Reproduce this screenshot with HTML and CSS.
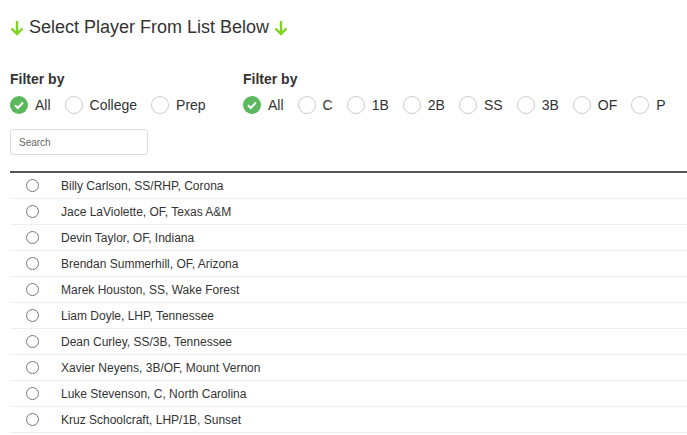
FILE: index.html
```html
<!DOCTYPE html>
<html>
<head>
<meta charset="utf-8">
<link rel="stylesheet" href="styles.css">
</head>
<body>
<div class="page">
  <h2 class="title">
    <svg class="arrow" viewBox="0 0 14 16" width="14" height="16"><path d="M7 1 V14 M1.5 8.5 L7 14 L12.5 8.5" fill="none" stroke="#7ed321" stroke-width="2.4"/></svg>
    <span>Select Player From List Below</span>
    <svg class="arrow" viewBox="0 0 14 16" width="14" height="16"><path d="M7 1 V14 M1.5 8.5 L7 14 L12.5 8.5" fill="none" stroke="#7ed321" stroke-width="2.4"/></svg>
  </h2>

  <div class="filters">
    <div class="group g1">
      <div class="label">Filter by</div>
      <div class="opts">
        <span class="opt"><span class="check"><svg viewBox="0 0 18 18" width="18" height="18"><circle cx="9" cy="9" r="9" fill="#5cb85c"/><path d="M5 9.3 L7.8 12 L13 6.5" fill="none" stroke="#fff" stroke-width="2"/></svg></span>All</span>
        <span class="opt"><span class="circ"></span>College</span>
        <span class="opt"><span class="circ"></span>Prep</span>
      </div>
    </div>
    <div class="group g2">
      <div class="label">Filter by</div>
      <div class="opts">
        <span class="opt"><span class="check"><svg viewBox="0 0 18 18" width="18" height="18"><circle cx="9" cy="9" r="9" fill="#5cb85c"/><path d="M5 9.3 L7.8 12 L13 6.5" fill="none" stroke="#fff" stroke-width="2"/></svg></span>All</span>
        <span class="opt"><span class="circ"></span>C</span>
        <span class="opt"><span class="circ"></span>1B</span>
        <span class="opt"><span class="circ"></span>2B</span>
        <span class="opt"><span class="circ"></span>SS</span>
        <span class="opt"><span class="circ"></span>3B</span>
        <span class="opt"><span class="circ"></span>OF</span>
        <span class="opt"><span class="circ"></span>P</span>
      </div>
    </div>
  </div>

  <input class="search" type="text" placeholder="Search">

  <ul class="list">
    <li><span class="r"></span>Billy Carlson, SS/RHP, Corona</li>
    <li><span class="r"></span>Jace LaViolette, OF, Texas A&amp;M</li>
    <li><span class="r"></span>Devin Taylor, OF, Indiana</li>
    <li><span class="r"></span>Brendan Summerhill, OF, Arizona</li>
    <li><span class="r"></span>Marek Houston, SS, Wake Forest</li>
    <li><span class="r"></span>Liam Doyle, LHP, Tennessee</li>
    <li><span class="r"></span>Dean Curley, SS/3B, Tennessee</li>
    <li><span class="r"></span>Xavier Neyens, 3B/OF, Mount Vernon</li>
    <li><span class="r"></span>Luke Stevenson, C, North Carolina</li>
    <li><span class="r"></span>Kruz Schoolcraft, LHP/1B, Sunset</li>
  </ul>
</div>
</body>
</html>
```
FILE: styles.css
```css
html, body {
  margin: 0;
  padding: 0;
  background: #fff;
}
body {
  font-family: "Liberation Sans", Arial, sans-serif;
  color: #333;
  overflow: hidden;
}
.page {
  padding: 0 0 0 10px;
}
.title {
  margin: 0;
  padding-top: 17px;
  height: 21px;
  display: flex;
  align-items: center;
  gap: 5px;
  font-size: 18px;
  font-weight: normal;
  color: #333;
}
.arrow {
  display: block;
}
.filters {
  display: flex;
  margin-top: 33px;
}
.g1 {
  width: 233px;
}
.label {
  font-size: 14px;
  font-weight: bold;
  line-height: 16px;
}
.opts {
  display: flex;
  align-items: center;
  margin-top: 8px;
  height: 20px;
}
.opt {
  display: flex;
  align-items: center;
  font-size: 14px;
  margin-right: 14px;
}
.check, .circ {
  width: 18px;
  height: 18px;
  margin-right: 7px;
  box-sizing: border-box;
}
.check svg {
  display: block;
}
.circ {
  border: 1px solid #ccc;
  border-radius: 50%;
}
.search {
  display: block;
  margin-top: 14px;
  width: 138px;
  height: 26px;
  box-sizing: border-box;
  border: 1px solid #ddd;
  border-radius: 3px;
  padding: 0 8px;
  font-family: "Liberation Sans", Arial, sans-serif;
  font-size: 10px;
  color: #333;
  outline: none;
}
.search::placeholder {
  color: #666;
}
.list {
  list-style: none;
  margin: 16px 0 0 0;
  padding: 0;
  border-top: 2px solid #555;
}
.list li {
  display: flex;
  align-items: center;
  height: 25px;
  border-bottom: 1px solid #eee;
  font-size: 12px;
  color: #333;
}
.r {
  width: 13px;
  height: 13px;
  box-sizing: border-box;
  border: 1px solid #777;
  border-radius: 50%;
  margin-left: 16px;
  margin-right: 22px;
}
```
